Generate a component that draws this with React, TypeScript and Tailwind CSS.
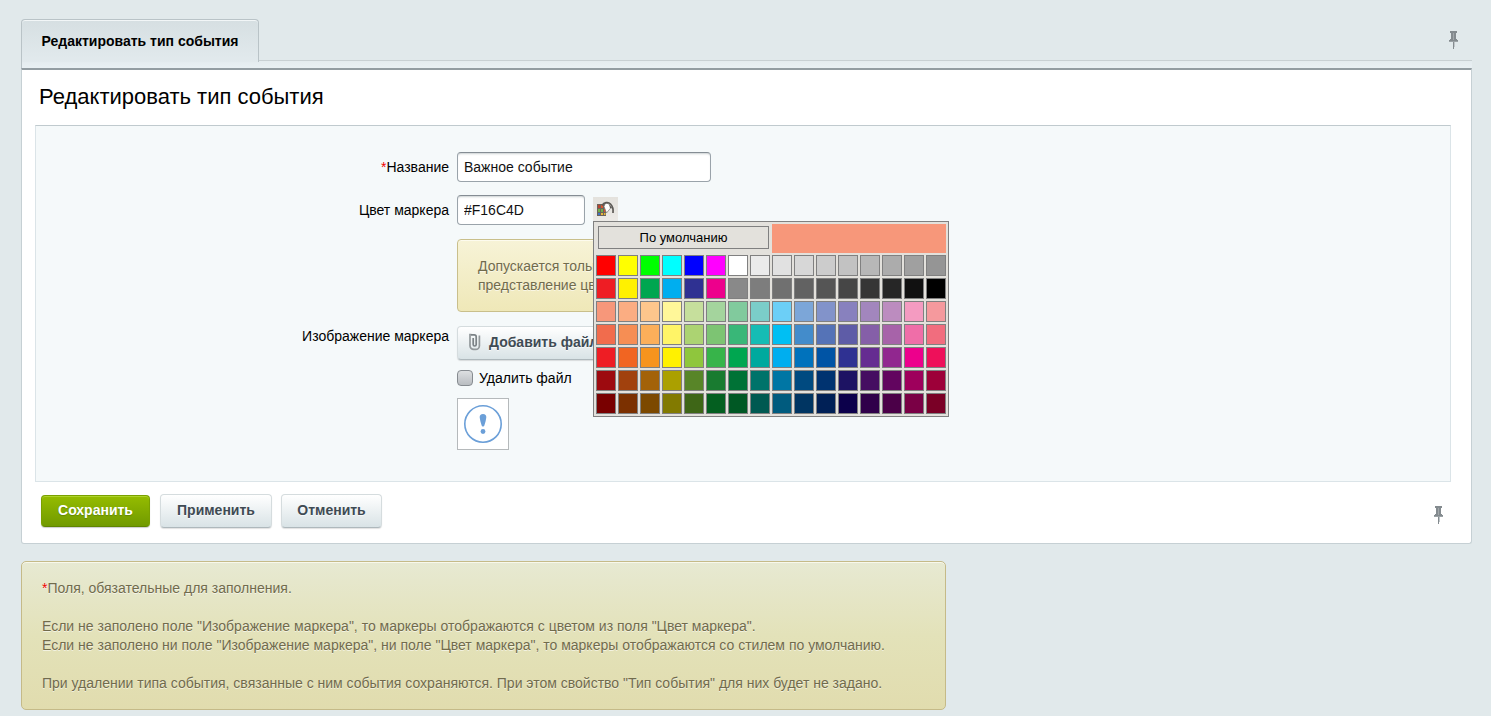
import { useState } from "react";

const PALETTE: string[][] = [
  "FF0000 FFFF00 00FF00 00FFFF 0000FF FF00FF FFFFFF EBEBEB E1E1E1 D7D7D7 CCCCCC C2C2C2 B7B7B7 ACACAC A0A0A0 959595",
  "EE1D24 FFF100 00A650 00AEEF 2F3192 ED008C 898989 7D7D7D 707070 626262 555555 464646 363636 262626 111111 000000",
  "F7977A FBAD82 FDC68C FFF799 C6DF9C A4D49D 81CA9D 7BCDC9 6CCFF7 7CA6D8 8293CA 8881BE A286BD BC8CBF F49BC1 F5999D",
  "F16C4D F68E54 FBAF5A FFF467 ACD372 7DC473 39B778 16BCB4 00BFF3 438CCB 5573B7 5E5CA7 855FA8 A763A9 EF6EA8 F16D7E",
  "EE1D24 F16522 F7941D FFF100 8FC63D 37B44A 00A650 00A99E 00AEEF 0072BC 0054A5 2F3192 652C91 91278F ED008C EE105A",
  "9D0A0F A1410D A36209 ABA000 588528 197B30 007236 00736A 0076A4 004A80 003370 1D1363 450E61 62055F 9E005C 9D0039",
  "790000 7B3000 7C4900 827A00 3E6617 045F20 005824 005951 005B7E 003562 002056 0C004B 30004A 4B0048 7A0045 7A0026",
].map((row) => row.split(" ").map((c) => "#" + c));

const FIELD =
  "h-[30px] rounded-[4px] border border-[#9aa3aa] border-t-[#858d94] bg-white px-1.5 text-sm text-[#111] shadow-[inset_0_2px_2px_-1px_rgba(140,150,155,0.45)] outline-none";
const GREY_BUTTON =
  "rounded-[4px] border border-[#d5dcde] border-b-[#aeb8bc] bg-gradient-to-b from-white to-[#d9e3e6] text-sm font-bold text-[#3f4b54] shadow-[0_1px_1px_rgba(0,0,0,0.12)] [text-shadow:0_1px_0_rgba(255,255,255,0.7)]";
const ROW = "grid grid-cols-[413fr_993fr] gap-x-2";
const LABEL = "text-right text-sm leading-[30px]";

function Pin() {
  return (
    <svg width="11" height="18" viewBox="0 0 11 18" className="block" aria-hidden="true">
      <path d="M2 0h7v2H8v6h1v1h1v2H1V9h1V8h1V2H2z" fill="#848b8f" />
      <path d="M5 2h1v7H5z" fill="#a2a8ab" />
      <path d="M1 10h9v1H1z" fill="#9ba2a5" />
      <path d="M5 11h1v7H5z" fill="#848b8f" />
      <path d="M6 11h1v5H6z" fill="#c0c6c9" />
    </svg>
  );
}

function BucketIcon() {
  return (
    <svg width="19" height="17" viewBox="0 0 19 17" aria-hidden="true">
      <path d="M1 3h9v12H1z" fill="#6b635b" />
      <path d="M2 4h2v3H2z" fill="#b8442f" />
      <path d="M5 4h2v3H5z" fill="#d9542f" />
      <path d="M2 8h2v3H2zM5 8h2v3H5z" fill="#6fb04a" />
      <path d="M2 12h2v2H2z" fill="#3f74c4" />
      <path d="M5 12h2v2H5z" fill="#e8b83a" />
      <path d="M8 12h1.500v2H8z" fill="#e8b83a" />
      <path d="M8 8h1.500v3H8z" fill="#d9542f" />
      <path d="M9.500 2L8 5.500 10.500 12l5-6L12 2.500z" fill="#fff" stroke="#77746f" strokeWidth=".7" />
      <path d="M6 4.500C8 1.500 12 .5 14.500 3c2 2 3 5 2.500 9" fill="none" stroke="#5c5a56" strokeWidth="1.700" />
      <path d="M13 3l3.500 4.500L14 7z" fill="#5c5a56" />
    </svg>
  );
}

function Clip() {
  return (
    <svg width="13" height="18" viewBox="0 0 13 18" fill="none" aria-hidden="true">
      <path
        d="M3.500 1.500H2v11.200a3.700 3.700 0 0 0 3.700 3.700h2a3.700 3.700 0 0 0 3.700-3.700V2.500"
        stroke="#92989b"
        strokeWidth="1.700"
      />
      <path d="M3 1.800h3.200a2 2 0 0 1 2 2v7.700a1.500 1.500 0 0 1-3 0V5" stroke="#7b8286" strokeWidth="1.700" />
    </svg>
  );
}

export default function App() {
  const [name, setName] = useState("Важное событие");
  const [color, setColor] = useState("#F16C4D");
  const [preview, setPreview] = useState("#F7977A");
  const [open, setOpen] = useState(true);

  return (
    <div className="min-h-screen bg-[#e1e9eb] pt-[19px] pr-[19px] pb-1.5 pl-[21px] font-['Liberation_Sans',Arial,sans-serif] text-sm text-black">
      <header>
        <div className="flex items-stretch">
          <div className="-mb-px min-w-[238px] rounded-t-[4px] border border-b-0 border-[#b9c3c7] bg-gradient-to-b from-[#d6dfe2] to-[#e2eaed] px-[17px] shadow-[inset_0_1px_0_#f2f6f7]">
            <a href="#edit" className="block text-center text-sm leading-[42px] font-bold">
              Редактировать тип события
            </a>
          </div>
          <div className="flex flex-1 items-center justify-end border-b border-[#c8d0d3] pr-[13px]">
            <button type="button" aria-label="Закрепить вкладки">
              <Pin />
            </button>
          </div>
        </div>
        <div className="h-[7px] border-l border-[#b9c3c7] bg-gradient-to-b from-[#e4ecef] to-[#e9f0f3]" />
      </header>

      <form
        className="rounded-b-[3px] border border-t-2 border-[#c6d0d4] border-t-[#939da2] bg-white pr-5 pl-[13px]"
        onSubmit={(e) => e.preventDefault()}
      >
        <h1 className="pb-0.5 pl-1 text-[22px] leading-[53px]">Редактировать тип события</h1>

        <div className="border border-[#dbe4e8] border-t-[#c0cace] bg-[#f5f9fa] pt-[26px] pb-[31px]">
          <div className={ROW}>
            <label htmlFor="name" className={LABEL}>
              <span className="text-[#f00000]">*</span>Название
            </label>
            <div className="flex">
              <input id="name" className={FIELD + " w-[254px]"} value={name} onChange={(e) => setName(e.target.value)} />
            </div>
          </div>

          <div className={ROW + " mt-[13px]"}>
            <label htmlFor="color" className={LABEL}>
              Цвет маркера
            </label>
            <div className="flex items-start gap-2">
              <input id="color" className={FIELD + " w-32"} value={color} onChange={(e) => setColor(e.target.value)} />
              <div className="relative mt-0.5">
                <button
                  type="button"
                  aria-label="Выбрать цвет"
                  onClick={() => setOpen(!open)}
                  className="flex h-6 w-[25px] items-center justify-center bg-gradient-to-b from-[#e4e2dd] to-[#eceae6]"
                >
                  <BucketIcon />
                </button>
                {open && (
                  <div className="absolute top-6 left-0 z-10 border border-[#808080] bg-[#e3e1dc] p-0.5">
                    <div className="flex justify-between">
                      <button
                        type="button"
                        onClick={() => setColor("")}
                        className="m-0.5 h-[23px] w-[171px] border border-[#808080] text-[13px] leading-[21px]"
                      >
                        По умолчанию
                      </button>
                      <div className="h-[29px] w-[174px]" style={{ backgroundColor: preview }} />
                    </div>
                    <div className="mt-0.5 grid grid-cols-[repeat(16,20px)] gap-0.5">
                      {PALETTE.flat().map((c, i) => (
                        <button
                          key={i}
                          type="button"
                          aria-label={c}
                          onMouseEnter={() => setPreview(c)}
                          onClick={() => setColor(c)}
                          className="h-[21px] border border-[#808080]"
                          style={{ backgroundColor: c }}
                        />
                      ))}
                    </div>
                  </div>
                )}
              </div>
            </div>
          </div>

          <div className={ROW + " mt-3.5"}>
            <span />
            <div className="w-fit rounded-[4px] border border-[#c9bf8b] bg-gradient-to-b from-[#f7f3d7] to-[#efe8b8] px-5 pt-[17px] pb-4 leading-[19px] text-[#716b4c] shadow-[inset_0_1px_0_#fdfbee] [text-shadow:0_1px_0_rgba(255,255,255,0.6)]">
              Допускается только
              <br />
              представление цвета
            </div>
          </div>

          <div className={ROW + " mt-3.5"}>
            <span className="pt-px text-right leading-[19px]">Изображение маркера</span>
            <div className="flex">
              <button type="button" className={GREY_BUTTON + " flex h-[34px] items-center gap-2 px-2.5 pb-0.5"}>
                <Clip />
                Добавить файл
              </button>
            </div>
          </div>

          <div className={ROW + " mt-[9px]"}>
            <span />
            <label className="flex h-[17px] items-center gap-1.5">
              <input
                type="checkbox"
                className="size-4 appearance-none rounded-[4px] border border-[#868b90] bg-gradient-to-b from-[#dddfe1] to-[#b9bdc1] checked:to-[#7d8790]"
              />
              Удалить файл
            </label>
          </div>

          <div className={ROW + " mt-3"}>
            <span />
            <div className="flex size-[52px] items-center justify-center border border-[#b5b9bb] bg-white">
              <svg width="40" height="40" viewBox="0 0 40 40" role="img" aria-label="Маркер события">
                <circle cx="20" cy="20" r="18.200" fill="none" stroke="#6b9fd8" strokeWidth="1.600" />
                <path d="M20 10c2.300 0 3.500 1.300 3.300 3.500-.2 2.500-1 5-1.800 7.500-.6 2-2.400 2-3 0-.8-2.500-1.600-5-1.800-7.500C16.500 11.300 17.700 10 20 10z" fill="#6b9fd8" />
                <circle cx="20" cy="27.500" r="2.400" fill="#6b9fd8" />
              </svg>
            </div>
          </div>
        </div>

        <div className="flex items-center pt-3 pb-[15px] pl-1.5">
          <button
            type="submit"
            className="mr-2.5 h-8 min-w-[109px] rounded-[4px] border border-[#7aa000] border-b-[#5f8500] bg-gradient-to-b from-[#95bc00] to-[#719a00] px-3.5 pb-0.5 text-sm font-bold text-white shadow-[0_1px_1px_rgba(0,0,0,0.2),inset_0_1px_0_#add32a] [text-shadow:0_1px_1px_rgba(60,90,0,0.4)]"
          >
            Сохранить
          </button>
          <button type="button" className={GREY_BUTTON + " mr-[9px] h-[34px] min-w-28 px-3.5 pb-0.5"}>
            Применить
          </button>
          <button type="button" className={GREY_BUTTON + " h-[34px] min-w-[101px] px-3.5 pb-0.5"}>
            Отменить
          </button>
          <button type="button" aria-label="Закрепить панель" className="mt-2 ml-auto mr-[7px]">
            <Pin />
          </button>
        </div>
      </form>

      <div className="mt-[17px] w-full max-w-[925px] rounded-[5px] border border-[#c5ba88] bg-gradient-to-b from-[#e7e9d2] via-[#e3e2b9] to-[#e1dcae] pt-[17px] pr-5 pb-4 pl-5 leading-[19px] text-[#716b4c] shadow-[inset_0_1px_0_#f8f8ec] [text-shadow:0_1px_0_rgba(255,255,255,0.6)]">
        <p>
          <span className="text-[#f00000]">*</span>Поля, обязательные для заполнения.
        </p>
        <p className="mt-[19px]">
          Если не заполено поле "Изображение маркера", то маркеры отображаются с цветом из поля "Цвет маркера".
          <br />
          Если не заполено ни поле "Изображение маркера", ни поле "Цвет маркера", то маркеры отображаются со стилем по умолчанию.
        </p>
        <p className="mt-[19px]">
          При удалении типа события, связанные с ним события сохраняются. При этом свойство "Тип события" для них будет не задано.
        </p>
      </div>
    </div>
  );
}
